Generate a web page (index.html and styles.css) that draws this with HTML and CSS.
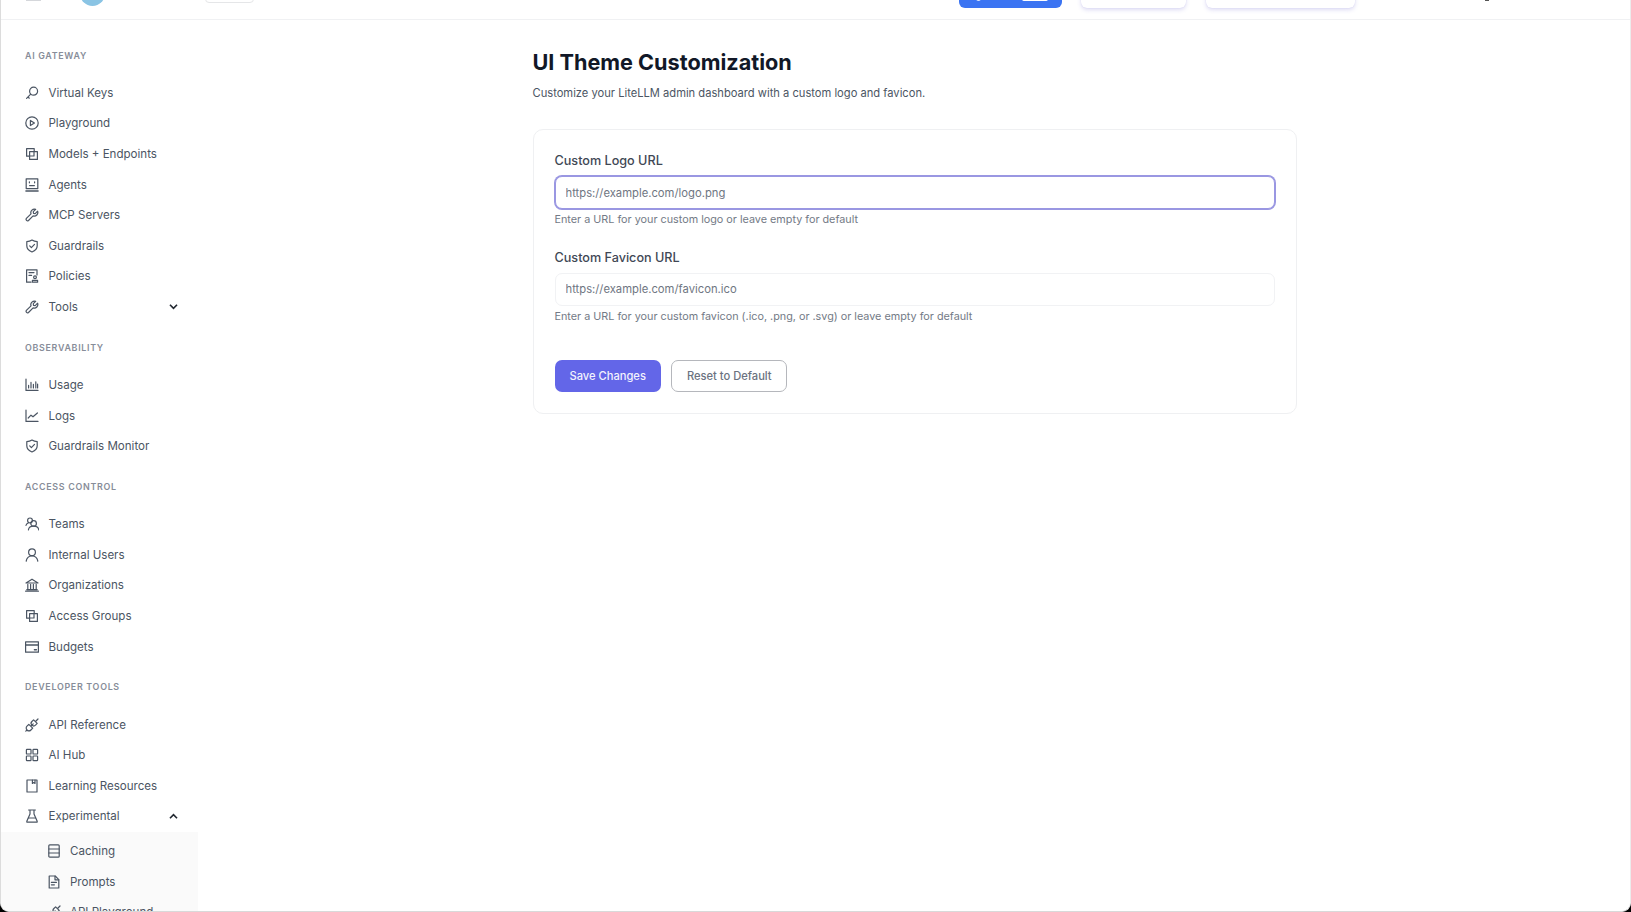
FILE: index.html
```html
<!DOCTYPE html>
<html lang="en">
<head>
<meta charset="utf-8">
<title>UI Theme Customization</title>
<link rel="stylesheet" href="styles.css">
</head>
<body>
<svg class="defs" aria-hidden="true">
  <symbol id="i-key" viewBox="0 0 14 14"><circle cx="8.6" cy="5.2" r="4"/><path d="M5.7 8.1 1.6 12.4M3 11l1.3 1.2"/></symbol>
  <symbol id="i-play" viewBox="0 0 14 14"><circle cx="7" cy="7" r="6.2"/><path d="M5.4 4.4v5.2L9.4 7z"/></symbol>
  <symbol id="i-block" viewBox="0 0 14 14"><path d="M4.4 9.2H1.6V1.6h7.6v2.8"/><path d="M4.6 4.6h7.8v7.8H4.6z"/><path d="M4.6 9h4.4V4.6"/></symbol>
  <symbol id="i-agent" viewBox="0 0 14 14"><path d="M1.2 .8h11.6v9.8H1.2z"/><path d="M1 13h12" stroke-width="1.6"/><path d="M4.4 3.8v1M9.6 3.8v1M4.6 7.6h4.8"/></symbol>
  <symbol id="i-tool" viewBox="0 0 14 14"><path d="M12.6 3.2 10.2 5.6 8.5 5.4 8.3 3.7 10.7 1.3A3.6 3.6 0 0 0 6 5.8L1.4 10.4a1.5 1.5 0 0 0 2.1 2.1L8.1 7.9a3.6 3.6 0 0 0 4.5-4.7z"/></symbol>
  <symbol id="i-shield" viewBox="0 0 14 14"><path d="M7 1c1.6 1 3.4 1.5 5.2 1.6v4.2c0 2.9-2 5-5.2 6.2-3.2-1.2-5.2-3.3-5.2-6.2V2.6C3.6 2.5 5.4 2 7 1z"/><path d="M4.7 6.9 6.4 8.6 9.5 5.4"/></symbol>
  <symbol id="i-policy" viewBox="0 0 14 14"><path d="M12 6V.8H1.6v12.4H6"/><path d="M4 3.6h5M4 6.4h2.6"/><circle cx="10" cy="8.2" r="1.4"/><path d="M7.4 13.2v-1.8h5.2v1.8z"/></symbol>
  <symbol id="i-bars" viewBox="0 0 14 14"><path d="M1 1v11.4h12"/><path d="M3.6 10V7.4M6 10V4.4M8.4 10V6.4M10.8 10V3.8M12.6 10V6"/></symbol>
  <symbol id="i-line" viewBox="0 0 14 14"><path d="M1 1v11.4h12"/><path d="M3.2 9 6 6.2 8 7.8 12.4 4"/></symbol>
  <symbol id="i-team" viewBox="0 0 14 14"><circle cx="5" cy="3.4" r="2.4"/><circle cx="8.6" cy="6.4" r="2.8"/><path d="M1 8.4C1.4 7 2.2 6.4 3.2 6M3.4 13c.3-2.4 2.4-3.8 5.2-3.8s4.9 1.4 5.2 3.8"/></symbol>
  <symbol id="i-user" viewBox="0 0 14 14"><circle cx="7" cy="4.2" r="3.4"/><path d="M1.2 13.2c.4-3 2.8-5.2 5.8-5.2s5.4 2.2 5.8 5.2"/></symbol>
  <symbol id="i-bank" viewBox="0 0 14 14"><path d="M1 5 7 1.2 13 5z"/><path d="M2.8 6.4v4.8M5.6 6.4v4.8M8.4 6.4v4.8M11.2 6.4v4.8M1.8 11.6h10.4M.6 13.2h12.8"/></symbol>
  <symbol id="i-card" viewBox="0 0 14 14"><path d="M.6 1.8h12.8v10.4H.6z"/><path d="M.6 5h12.8M9.4 9.8h2" stroke-width="1.4"/></symbol>
  <symbol id="i-api" viewBox="0 0 14 14"><path d="M8.6 1.8 12.2 5.400 10.500 7.100a2.500 2.500 0 0 1-3.600-3.600zM13 1 11 3"/><path d="M3.800 6.300 7.700 10.200 5.900 12a2.700 2.700 0 0 1-3.900-3.900zM.8 13.200 2 12M8.200 5.800 6 8"/></symbol>
  <symbol id="i-grid" viewBox="0 0 14 14"><rect x="1.4" y="1.4" width="4.6" height="4.6" rx=".6"/><rect x="8" y="1.4" width="4.6" height="4.6" rx=".6"/><rect x="1.4" y="8" width="4.6" height="4.6" rx=".6"/><rect x="8" y="8" width="4.6" height="4.6" rx=".6"/></symbol>
  <symbol id="i-book" viewBox="0 0 14 14"><path d="M2 1h10v12H2z"/><path d="M7.4 1v3.4l1.3-.8 1.3.8V1"/></symbol>
  <symbol id="i-flask" viewBox="0 0 14 14"><path d="M3.6 1h6.800M5 1v4L1.800 12.200c-.3.500 0 1 .6 1h9.200c.6 0 .9-.5.6-1L9 5V1"/><path d="M3.400 9h7.200"/></symbol>
  <symbol id="i-db" viewBox="0 0 14 14"><rect x="1.800" y=".8" width="10.400" height="12.400" rx="1"/><path d="M1.800 5h10.400M1.800 9h10.400"/></symbol>
  <symbol id="i-file" viewBox="0 0 14 14"><path d="M2.200 1h6l3.600 3.600V13H2.200z"/><path d="M8 1v3.800h3.800M4.400 7.400h5M4.400 9.800h3"/></symbol>
  <symbol id="i-chev-down" viewBox="0 0 10 10"><path d="M1.800 3.400 5 6.600 8.200 3.400"/></symbol>
  <symbol id="i-chev-up" viewBox="0 0 10 10"><path d="M1.800 6.600 5 3.400 8.200 6.600"/></symbol>
</svg>

<div class="app">
  <header class="topbar">
    <div class="topbar-left">
      <span class="burger"></span>
      <span class="logo"></span>
      <span class="env-tag"></span>
    </div>
    <div class="topbar-right">
      <span class="btn-blue"><span class="blue-icon"></span><span class="blue-pill"></span></span>
      <span class="btn-white btn-white-a"></span>
      <span class="btn-white btn-white-b"></span>
      <span class="user-speck"></span>
    </div>
  </header>

  <div class="body-row">
    <nav class="sidebar">
      <section class="nav-group">
        <h2 class="nav-label">AI GATEWAY</h2>
        <a class="nav-item"><svg class="ico"><use href="#i-key"/></svg>Virtual Keys</a>
        <a class="nav-item"><svg class="ico"><use href="#i-play"/></svg>Playground</a>
        <a class="nav-item"><svg class="ico"><use href="#i-block"/></svg>Models + Endpoints</a>
        <a class="nav-item"><svg class="ico"><use href="#i-agent"/></svg>Agents</a>
        <a class="nav-item"><svg class="ico"><use href="#i-tool"/></svg>MCP Servers</a>
        <a class="nav-item"><svg class="ico"><use href="#i-shield"/></svg>Guardrails</a>
        <a class="nav-item"><svg class="ico"><use href="#i-policy"/></svg>Policies</a>
        <a class="nav-item"><svg class="ico"><use href="#i-tool"/></svg>Tools<svg class="chev"><use href="#i-chev-down"/></svg></a>
      </section>
      <section class="nav-group">
        <h2 class="nav-label">OBSERVABILITY</h2>
        <a class="nav-item"><svg class="ico"><use href="#i-bars"/></svg>Usage</a>
        <a class="nav-item"><svg class="ico"><use href="#i-line"/></svg>Logs</a>
        <a class="nav-item"><svg class="ico"><use href="#i-shield"/></svg>Guardrails Monitor</a>
      </section>
      <section class="nav-group">
        <h2 class="nav-label">ACCESS CONTROL</h2>
        <a class="nav-item"><svg class="ico"><use href="#i-team"/></svg>Teams</a>
        <a class="nav-item"><svg class="ico"><use href="#i-user"/></svg>Internal Users</a>
        <a class="nav-item"><svg class="ico"><use href="#i-bank"/></svg>Organizations</a>
        <a class="nav-item"><svg class="ico"><use href="#i-block"/></svg>Access Groups</a>
        <a class="nav-item"><svg class="ico"><use href="#i-card"/></svg>Budgets</a>
      </section>
      <section class="nav-group">
        <h2 class="nav-label">DEVELOPER TOOLS</h2>
        <a class="nav-item"><svg class="ico"><use href="#i-api"/></svg>API Reference</a>
        <a class="nav-item"><svg class="ico"><use href="#i-grid"/></svg>AI Hub</a>
        <a class="nav-item"><svg class="ico"><use href="#i-book"/></svg>Learning Resources</a>
        <a class="nav-item"><svg class="ico"><use href="#i-flask"/></svg>Experimental<svg class="chev"><use href="#i-chev-up"/></svg></a>
        <div class="submenu">
          <a class="nav-item nav-sub"><svg class="ico"><use href="#i-db"/></svg>Caching</a>
          <a class="nav-item nav-sub"><svg class="ico"><use href="#i-file"/></svg>Prompts</a>
          <a class="nav-item nav-sub"><svg class="ico"><use href="#i-api"/></svg>API Playground</a>
        </div>
      </section>
    </nav>

    <main class="main">
      <div class="content">
        <h1 class="title">UI Theme Customization</h1>
        <p class="subtitle">Customize your LiteLLM admin dashboard with a custom logo and favicon.</p>
        <form class="card">
          <div class="field">
            <label class="field-label" for="logo-url">Custom Logo URL</label>
            <input class="input input-focus" id="logo-url" type="text" placeholder="https://example.com/logo.png">
            <p class="hint">Enter a URL for your custom logo or leave empty for default</p>
          </div>
          <div class="field">
            <label class="field-label" for="favicon-url">Custom Favicon URL</label>
            <input class="input" id="favicon-url" type="text" placeholder="https://example.com/favicon.ico">
            <p class="hint">Enter a URL for your custom favicon (.ico, .png, or .svg) or leave empty for default</p>
          </div>
          <div class="actions">
            <button class="btn btn-primary" type="button">Save Changes</button>
            <button class="btn btn-outline" type="button">Reset to Default</button>
          </div>
        </form>
      </div>
    </main>
  </div>
</div>
</body>
</html>
```

FILE: styles.css
```css
* { box-sizing: border-box; }

html, body {
  margin: 0;
  height: 100%;
  background: #000;
  overflow: hidden;
}

body {
  font-family: Inter, "Liberation Sans", sans-serif;
  color: #4b5563;
}

.defs { display: none; }

.app {
  height: 912px;
  display: flex;
  flex-direction: column;
  background: #fff;
  border-left: 1px solid #dcdcdc;
  border-right: 1px solid #ececec;
  border-bottom: 1px solid #d9d9d9;
  border-radius: 0 0 9px 9px;
  overflow: hidden;
}

/* top bar: its content is scrolled off the top of the photographed window */
.topbar {
  flex: none;
  height: 20px;
  display: flex;
  justify-content: space-between;
  align-items: flex-start;
  border-bottom: 1px solid #f0f1f3;
  padding-left: 25px;
  overflow: hidden;
}

.topbar-left, .topbar-right {
  display: flex;
  align-items: flex-start;
}

.burger {
  width: 15px;
  height: 1px;
  background: #d5d7db;
}

.logo {
  width: 25px;
  height: 25px;
  margin: -19px 0 0 39px;
  border-radius: 50%;
  background: #8ac4e4;
}

.env-tag {
  width: 49px;
  height: 20px;
  margin: -17px 0 0 100px;
  border: 1px solid #e5e6e8;
  border-radius: 4px;
}

.topbar-right {
  width: 671px;
}

.btn-blue {
  position: relative;
  width: 103px;
  height: 30px;
  margin-top: -22px;
  border-radius: 6px;
  background: #3b74f2;
}

.blue-icon, .blue-pill {
  position: absolute;
  bottom: 7px;
  height: 16px;
  background: #dfe8fd;
}

.blue-icon { left: 15px; width: 9px; border-radius: 50%; }
.blue-pill { left: 63px; width: 26px; background: #fff; border-radius: 2px; }

.btn-white {
  height: 30px;
  margin-top: -22px;
  border-radius: 6px;
  background: #fff;
  box-shadow: 0 2px 4px rgba(90, 80, 200, .2), 0 0 1px rgba(90, 80, 200, .2);
}

.btn-white-a { width: 105px; margin-left: 19px; }
.btn-white-b { width: 149px; margin-left: 20px; }

.user-speck {
  width: 4px;
  height: 1px;
  margin-left: 130px;
  background: #555;
}

.body-row {
  flex: 1;
  min-height: 0;
  display: flex;
}

/* sidebar */
.sidebar {
  flex: none;
  width: 197px;
  padding-top: 28.5px;
  overflow: hidden;
}

.nav-group { margin-bottom: 18.45px; }

.nav-label {
  margin: 0 0 15px 24px;
  font-size: 8.9px;
  line-height: 14px;
  font-weight: 600;
  letter-spacing: .7px;
  color: #878d99;
}

.nav-item {
  position: relative;
  display: flex;
  align-items: center;
  height: 30.6px;
  padding-left: 24px;
  font-size: 11.55px;
  color: #4b5563;
}

.ico {
  flex: none;
  width: 14px;
  height: 14px;
  margin-right: 9.5px;
  fill: none;
  stroke: #4b5563;
  stroke-width: 1.2;
  stroke-linejoin: round;
  stroke-linecap: round;
}

.chev {
  width: 11px;
  height: 11px;
  margin-left: auto;
  margin-right: 19px;
  fill: none;
  stroke: #222831;
  stroke-width: 1.5;
}

.submenu {
  padding-top: 4px;
  background: #fafafa;
}

.nav-sub { padding-left: 46px; }
.nav-sub .ico { margin-right: 9px; }

/* main */
.main {
  flex: 1;
  min-width: 0;
  display: flex;
  justify-content: center;
  padding: 28px 0 0 1px;
}

.content { width: 764px; }

.title {
  margin: 0;
  font-size: 21.65px;
  line-height: 29px;
  font-weight: 700;
  color: #111827;
}

.subtitle {
  margin: 7px 0 27px;
  font-size: 11.17px;
  line-height: 18px;
  color: #4b5563;
}

.card {
  height: 285px;
  padding: 22px 21px 21px;
  border: 1px solid #eff0f2;
  border-radius: 10px;
  background: #fff;
}

.field { margin-bottom: 20.5px; }

.field-label {
  display: block;
  margin-bottom: 6px;
  font-size: 12.64px;
  line-height: 18px;
  font-weight: 500;
  color: #3f4855;
}

.input {
  display: block;
  width: 100%;
  height: 33px;
  padding: 0 10px;
  border: 1px solid #f1f2f4;
  border-radius: 7px;
  background: #fff;
  outline: none;
  font: 400 11.26px Inter, "Liberation Sans", sans-serif;
  color: #374151;
}

.input::placeholder { color: #6f7682; opacity: 1; }

.input-focus {
  border-color: #9a97e2;
  box-shadow: 0 0 0 1px #9a97e2;
}

.hint {
  margin: 3px 0 0;
  font-size: 10.8px;
  line-height: 16px;
  color: #737a86;
}

.actions {
  display: flex;
  gap: 10.5px;
  margin-top: 35px;
}

.btn {
  height: 32px;
  padding: 0 15px;
  border-radius: 7px;
  font: 500 11.15px Inter, "Liberation Sans", sans-serif;
}

.btn-primary {
  border: 0;
  background: #6366e8;
  color: #f2f2fd;
}

.btn-outline {
  padding: 0 14.5px;
  border: 1px solid #b5b7bc;
  background: #fff;
  color: #6b7280;
}
```
